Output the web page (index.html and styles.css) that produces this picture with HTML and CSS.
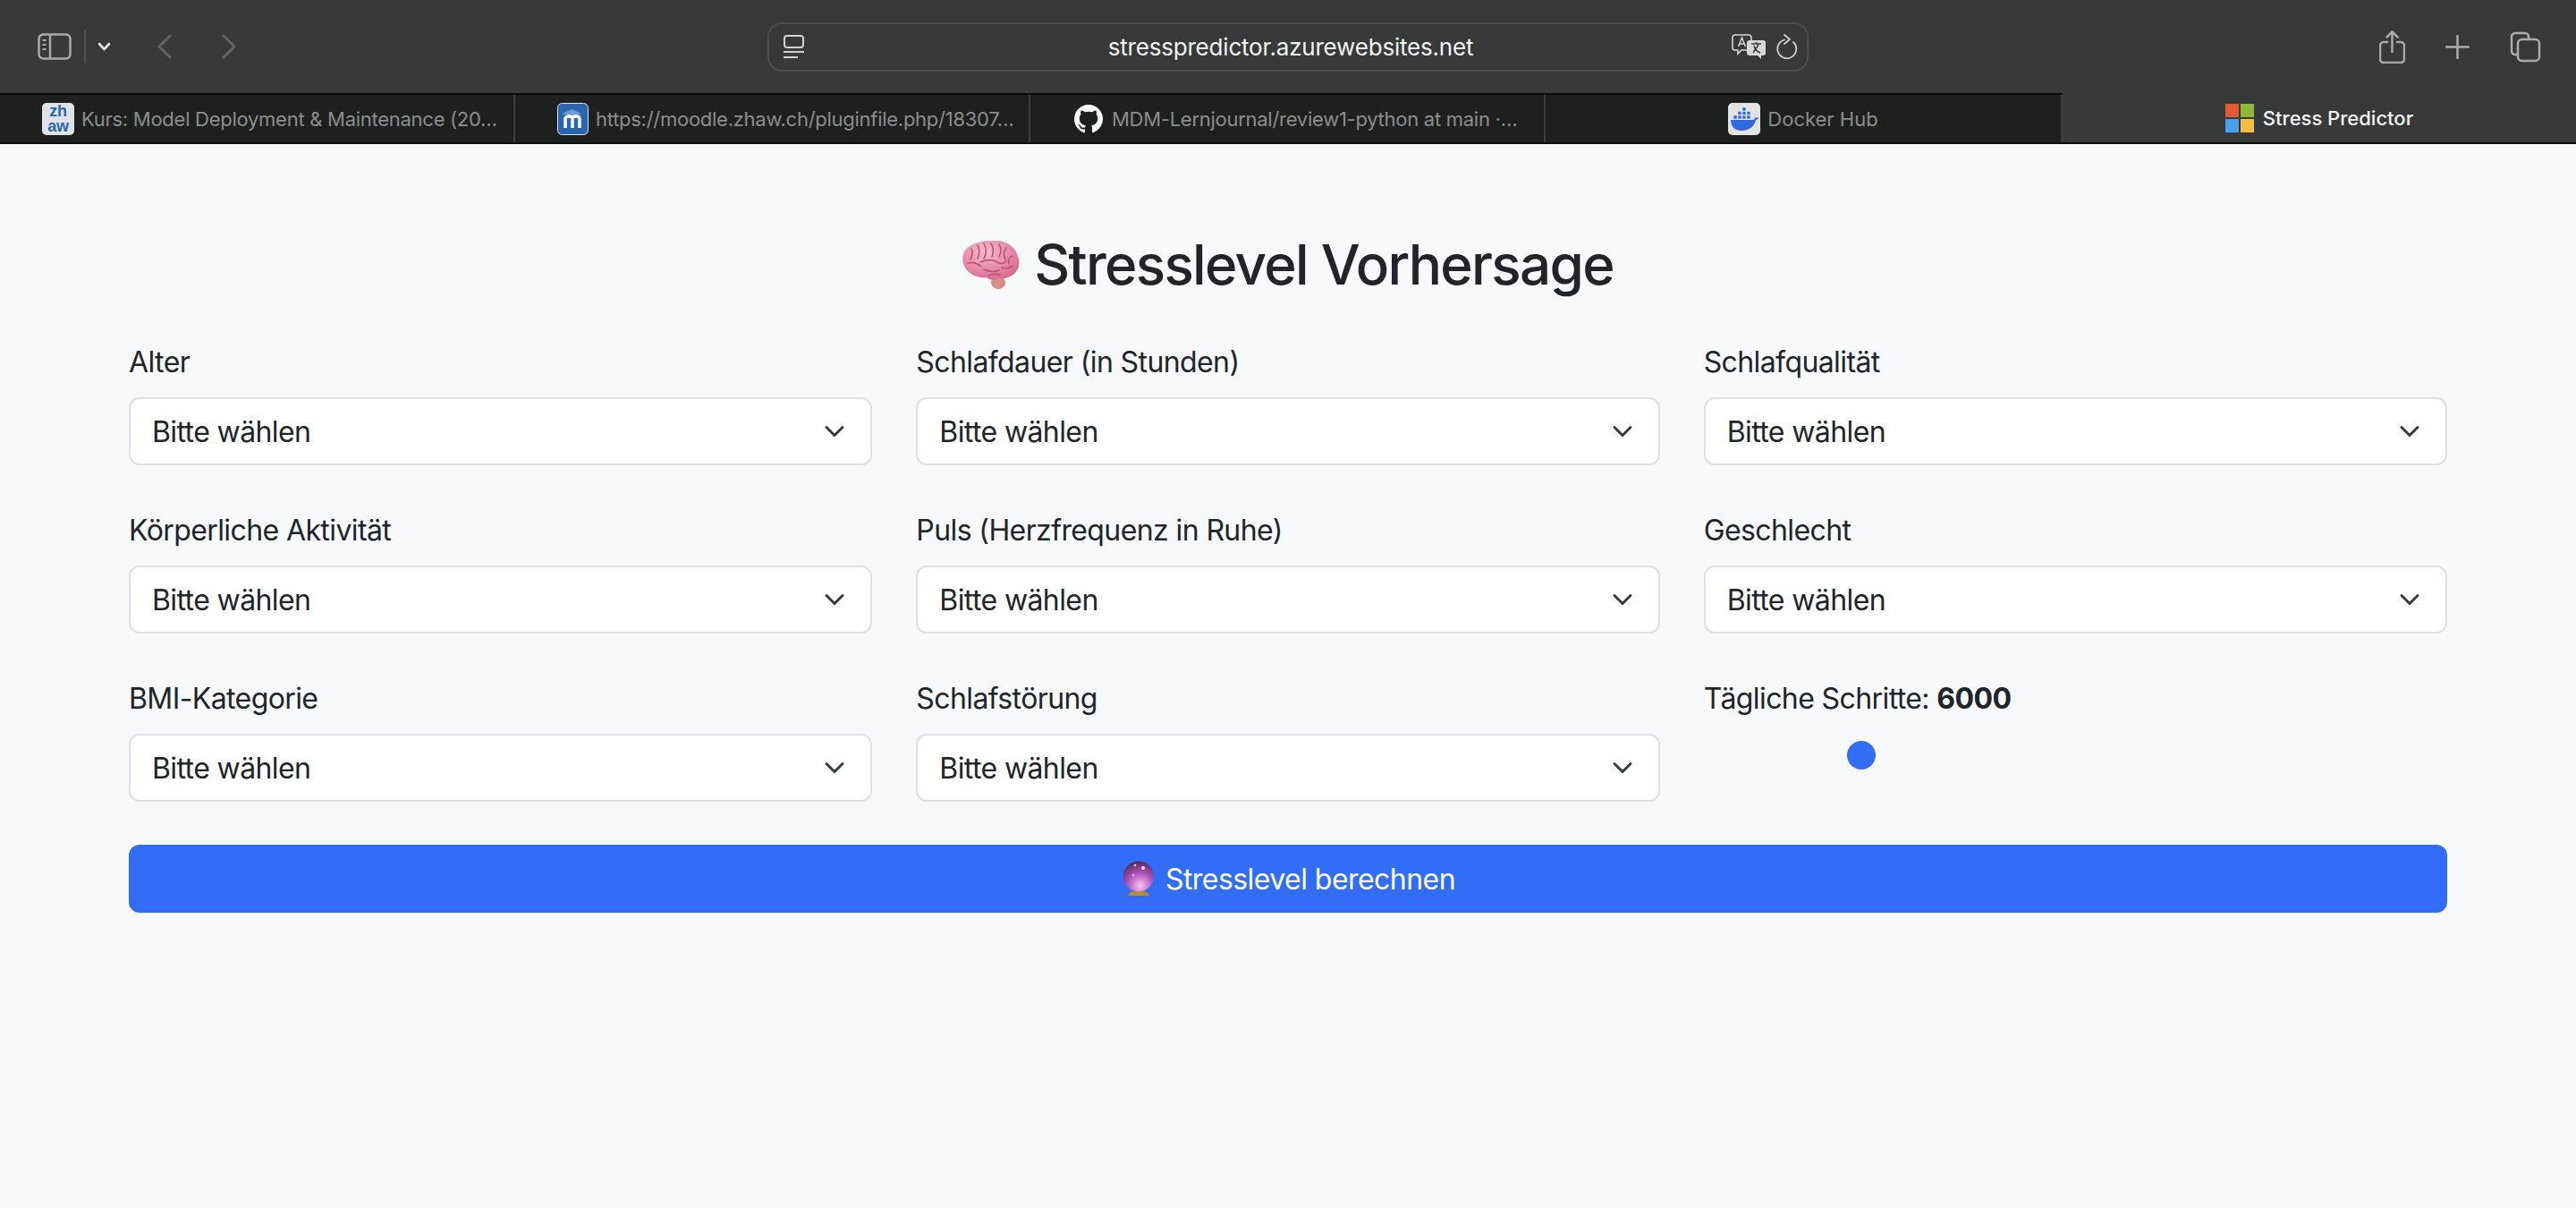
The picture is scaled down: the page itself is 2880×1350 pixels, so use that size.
FILE: index.html
```html
<!DOCTYPE html>
<html lang="de">
<head>
    <meta charset="UTF-8">
    <meta name="viewport" content="width=device-width, initial-scale=1.0">
    <title>Stress Predictor</title>
    <link rel="stylesheet" href="styles.css">
</head>
<body>
    <header class="browser">
        <div class="toolbar">
            <div class="toolbar_left">
                <svg class="icon_sidebar" width="38" height="30" viewBox="0 0 38 30" fill="none" stroke="#a9aaa9" stroke-width="2.5">
                    <rect x="1.5" y="1.5" width="35" height="27" rx="5"/>
                    <path d="M14 2v26"/>
                    <path d="M5.5 8h4M5.5 13h4M5.5 18h4" stroke-width="2"/>
                </svg>
                <span class="toolbar_divider"></span>
                <svg class="icon_more" width="15" height="10" viewBox="0 0 15 10" fill="none" stroke="#e6e6e6" stroke-width="2.6" stroke-linecap="round" stroke-linejoin="round">
                    <path d="M2 2l5.500 6L13 2"/>
                </svg>
                <svg class="icon_back" width="16" height="28" viewBox="0 0 16 28" fill="none" stroke="#616362" stroke-width="3" stroke-linecap="round" stroke-linejoin="round">
                    <path d="M14 2L2 14l12 12"/>
                </svg>
                <svg class="icon_forward" width="16" height="28" viewBox="0 0 16 28" fill="none" stroke="#616362" stroke-width="3" stroke-linecap="round" stroke-linejoin="round">
                    <path d="M2 2l12 12L2 26"/>
                </svg>
            </div>
            <div class="url_bar">
                <svg class="icon_reader" width="23" height="26" viewBox="0 0 23 26" fill="none" stroke="#d0d1d0" stroke-width="2">
                    <rect x="1" y="1" width="21" height="13" rx="3"/>
                    <path d="M0 19h23M0 25h16"/>
                </svg>
                <span class="url_text">stresspredictor.azurewebsites.net</span>
                <svg class="icon_translate" width="38" height="28" viewBox="0 0 38 28">
                    <path d="M4 1h15a3 3 0 0 1 3 3v11a3 3 0 0 1-3 3H11l-4 4v-4H4a3 3 0 0 1-3-3V4a3 3 0 0 1 3-3z" fill="#383a39" stroke="#d6d7d6" stroke-width="1.600"/>
                    <path d="M7.500 14l4-10 4 10M9 11h5" fill="none" stroke="#d6d7d6" stroke-width="1.500"/>
                    <path d="M20 7h15a3 3 0 0 1 3 3v11a3 3 0 0 1-3 3h-2v4l-4-4h-9a3 3 0 0 1-3-3V10a3 3 0 0 1 3-3z" fill="#d6d7d6"/>
                    <path d="M22 11h11M27.500 9v2M24 21l6-9M25 13c1 4 4 7 7 8" fill="none" stroke="#383a39" stroke-width="1.500"/>
                </svg>
                <svg class="icon_reload" width="24" height="28" viewBox="0 0 24 28" fill="none" stroke="#cfd0cf" stroke-width="1.800" stroke-linecap="round" stroke-linejoin="round">
                    <path d="M9 6.500a10.500 10.500 0 1 0 10 2.500"/>
                    <path d="M8 1l6 5-6 5" transform="translate(1 0)"/>
                </svg>
            </div>
            <div class="toolbar_right">
                <svg width="29" height="37" viewBox="0 0 29 37" fill="none" stroke="#a9aaa9" stroke-width="2.500" stroke-linecap="round" stroke-linejoin="round">
                    <path d="M9 13H5a4 4 0 0 0-4 4v15a4 4 0 0 0 4 4h19a4 4 0 0 0 4-4V17a4 4 0 0 0-4-4h-4"/>
                    <path d="M14.500 24V2M8.500 7.500l6-6 6 6"/>
                </svg>
                <svg width="27" height="27" viewBox="0 0 27 27" fill="none" stroke="#a9aaa9" stroke-width="2.500" stroke-linecap="round">
                    <path d="M13.500 1v25M1 13.500h25"/>
                </svg>
                <svg width="35" height="35" viewBox="0 0 35 35" fill="none" stroke="#a9aaa9" stroke-width="2.500">
                    <path d="M8 26H6a4 4 0 0 1-4-4V6a4 4 0 0 1 4-4h11a4 4 0 0 1 4 4v3"/>
                    <rect x="9" y="9" width="24" height="24" rx="4.500"/>
                </svg>
            </div>
        </div>
        <nav class="tab_bar">
            <div class="tab">
                <span class="favicon favicon_zhaw">zh<br>aw</span>
                <span class="tab_title">Kurs: Model Deployment &amp; Maintenance (20…</span>
            </div>
            <div class="tab">
                <svg class="favicon_svg" width="35" height="36" viewBox="0 0 35 36">
                    <rect x=".5" y=".5" width="34" height="35" rx="5" fill="#2a65ad" stroke="#dfe3e8"/>
                    <path d="M5 12l12-5 10 5-10 3z" fill="#6f9fd6"/>
                    <path d="M9 28V16M17 28V18c0-2 1.500-3 4-3s4 1 4 3v10M9 18c0-2 2-3 4-3s4 1 4 3" fill="none" stroke="#fff" stroke-width="3.500"/>
                </svg>
                <span class="tab_title">https://moodle.zhaw.ch/pluginfile.php/18307…</span>
            </div>
            <div class="tab tab_github">
                <svg class="favicon_svg" width="32" height="32" viewBox="0 0 16 16" fill="#fff">
                    <path d="M8 0C3.580 0 0 3.580 0 8c0 3.540 2.290 6.530 5.470 7.590.4.070.55-.17.55-.38 0-.19-.01-.82-.01-1.490-2.010.37-2.530-.49-2.690-.94-.09-.23-.48-.94-.82-1.130-.28-.15-.68-.52-.01-.53.63-.01 1.080.58 1.230.82.72 1.210 1.870.87 2.330.66.07-.52.28-.87.51-1.070-1.780-.2-3.640-.89-3.640-3.950 0-.87.31-1.590.82-2.150-.08-.2-.36-1.020.08-2.120 0 0 .67-.21 2.200.82.64-.18 1.320-.27 2-.27.68 0 1.360.09 2 .27 1.530-1.040 2.200-.82 2.200-.82.44 1.100.16 1.920.08 2.120.51.56.82 1.270.82 2.150 0 3.070-1.870 3.750-3.650 3.950.29.25.54.73.54 1.480 0 1.070-.01 1.930-.01 2.200 0 .21.15.46.55.38A8.013 8.013 0 0 0 16 8c0-4.420-3.580-8-8-8z"/>
                </svg>
                <span class="tab_title">MDM-Lernjournal/review1-python at main ·…</span>
            </div>
            <div class="tab tab_center tab_docker">
                <svg class="favicon_svg" width="36" height="36" viewBox="0 0 36 36">
                    <rect width="36" height="36" rx="5" fill="#e3e3e3"/>
                    <path d="M3 19h25c1 0 2-1 2.500-3 1 .7 2.500 1 4 .3-.7 1.700-2 2.700-3.500 2.900C29 27 23 31 15 31 7 31 3 26 3 19z" fill="#2f6ae0"/>
                    <path d="M6 14h4v4H6zM11 14h4v4h-4zM16 14h4v4h-4zM21 14h4v4h-4zM11 9.500h4v4h-4zM16 9.500h4v4h-4zM21 9.500h4v4h-4zM16 5h4v4h-4z" fill="#2f6ae0" stroke="#e3e3e3" stroke-width=".6"/>
                </svg>
                <span class="tab_title">Docker Hub</span>
            </div>
            <div class="tab tab_center tab_active">
                <span class="ms_logo">
                    <i class="ms_red"></i><i class="ms_green"></i><i class="ms_blue"></i><i class="ms_yellow"></i>
                </span>
                <span class="tab_title">Stress Predictor</span>
            </div>
        </nav>
    </header>

    <main class="container">
        <h2 class="page_title">
            <svg class="emoji_brain" width="64" height="54" viewBox="0 0 64 54">
                <defs>
                    <radialGradient id="brain_fill" cx="40%" cy="30%" r="75%">
                        <stop offset="0" stop-color="#f7bccd"/>
                        <stop offset="1" stop-color="#d8688e"/>
                    </radialGradient>
                </defs>
                <path d="M34 40c7-1 13 1 14 6 .6 4-3 8-8 8s-8-4-8-8z" fill="#d98f8a"/>
                <path d="M27 0c12-2 26 1 32 11 6 9 6 20-1 26-5 4-11 6-18 5-5 3-10 2-13-1C16 42 6 37 2 28-2 19 1 9 10 5c5-3 11-4 17-5z" fill="url(#brain_fill)"/>
                <path d="M10 9c2 4 1 8-1 12M17 5c3 5 2 10 0 15M24 3c3 6 3 12 0 17M32 3c3 5 3 10 1 15M41 4c3 5 2 10 0 14M49 8c-3 4-3 9-1 13M56 17c-4 1-5 5-4 9M6 25c6-1 11 0 15 4M20 24c7-3 14-3 19 0 3 2 7 2 10-1M24 32c6 3 12 3 17 1M29 39c4-2 9-2 13-1M44 30c4 2 8 1 12-2" fill="none" stroke="#bd5378" stroke-width="1.600" stroke-linecap="round"/>
            </svg>
            <span>Stresslevel Vorhersage</span>
        </h2>

        <form class="form_grid">
            <div class="field">
                <label class="field_label" for="alter">Alter</label>
                <select class="field_select" id="alter"><option>Bitte wählen</option></select>
            </div>
            <div class="field">
                <label class="field_label" for="schlafdauer">Schlafdauer (in Stunden)</label>
                <select class="field_select" id="schlafdauer"><option>Bitte wählen</option></select>
            </div>
            <div class="field">
                <label class="field_label" for="schlafqualitaet">Schlafqualität</label>
                <select class="field_select" id="schlafqualitaet"><option>Bitte wählen</option></select>
            </div>
            <div class="field">
                <label class="field_label" for="aktivitaet">Körperliche Aktivität</label>
                <select class="field_select" id="aktivitaet"><option>Bitte wählen</option></select>
            </div>
            <div class="field">
                <label class="field_label" for="puls">Puls (Herzfrequenz in Ruhe)</label>
                <select class="field_select" id="puls"><option>Bitte wählen</option></select>
            </div>
            <div class="field">
                <label class="field_label" for="geschlecht">Geschlecht</label>
                <select class="field_select" id="geschlecht"><option>Bitte wählen</option></select>
            </div>
            <div class="field">
                <label class="field_label" for="bmi">BMI-Kategorie</label>
                <select class="field_select" id="bmi"><option>Bitte wählen</option></select>
            </div>
            <div class="field">
                <label class="field_label" for="schlafstoerung">Schlafstörung</label>
                <select class="field_select" id="schlafstoerung"><option>Bitte wählen</option></select>
            </div>
            <div class="field">
                <label class="field_label" for="schritte">Tägliche Schritte: <b>6000</b></label>
                <input class="field_range" id="schritte" type="range" min="0" max="30000" step="500" value="6000">
            </div>
            <button class="submit_button" type="button">
                <svg width="36" height="40" viewBox="0 0 36 40">
                    <defs>
                        <radialGradient id="ball_fill" cx="55%" cy="80%" r="85%">
                            <stop offset="0" stop-color="#f3c6ee"/>
                            <stop offset=".45" stop-color="#b65cc0"/>
                            <stop offset="1" stop-color="#4a1f4e"/>
                        </radialGradient>
                    </defs>
                    <path d="M6 39c1-3 4-5 6-5h12c2 0 5 2 6 5z" fill="#b58a2e"/>
                    <circle cx="18" cy="17.500" r="17" fill="url(#ball_fill)"/>
                    <circle cx="23" cy="8" r="2" fill="#f7d8f5"/>
                    <circle cx="14" cy="5" r="1.200" fill="#f7d8f5"/>
                    <circle cx="12" cy="16" r="1.200" fill="#e8b8e8"/>
                </svg>
                <span>Stresslevel berechnen</span>
            </button>
        </form>
    </main>
</body>
</html>
```

FILE: styles.css
```css
* {
    margin: 0;
    padding: 0;
    box-sizing: border-box;
}
body {
    background: #f8f9fb;
    color: #212529;
    font-family: "Inter", "Liberation Sans", sans-serif;
}

/* browser window */
.browser {
    background: #383a39;
}
.toolbar {
    height: 104px;
    display: grid;
    grid-template-columns: 858px 1164px 1fr;
    align-items: center;
}
.toolbar_left {
    display: flex;
    align-items: center;
    padding-left: 42px;
}
.toolbar_divider {
    width: 2px;
    height: 36px;
    margin: 0 13px 0 14px;
    background: #4d4f4e;
}
.icon_back {
    margin-left: 52px;
}
.icon_forward {
    margin-left: 56px;
}
.url_bar {
    height: 55px;
    display: flex;
    align-items: center;
    padding: 0 10px 0 16px;
    border: 2px solid #4c4e4d;
    border-radius: 16px;
}
.url_text {
    flex: 1;
    text-align: center;
    color: #f2f2f2;
    font-size: 26px;
    letter-spacing: -0.2px;
    padding-left: 51px;
}
.icon_reload {
    margin-left: 12px;
}
.toolbar_right {
    display: flex;
    align-items: center;
    justify-content: flex-end;
    gap: 45px;
    padding-right: 39px;
}
.tab_bar {
    height: 57px;
    display: flex;
    border-top: 2px solid #0c0d0c;
    border-bottom: 2px solid #0c0d0c;
}
.tab {
    width: 576px;
    display: flex;
    align-items: center;
    gap: 8px;
    padding-left: 47px;
    background: #1e201f;
    border-right: 2px solid #3d3f3e;
    color: #8c8d8c;
    font-size: 22px;
    letter-spacing: -0.27px;
    white-space: nowrap;
}
.tab_github {
    gap: 10px;
    padding-left: 49px;
}
.tab_center {
    justify-content: center;
    padding-left: 0;
    letter-spacing: 0;
}
.tab_docker {
    width: 578px;
}
.tab_active {
    flex: 1;
    gap: 10px;
    background: #383a39;
    border-right: 0;
    color: #f4f4f4;
    font-weight: 500;
    margin-top: -2px;
}
.favicon {
    flex: none;
    width: 36px;
    height: 36px;
    border-radius: 5px;
    text-align: center;
    font-family: "Liberation Sans", sans-serif;
    font-weight: 700;
}
.favicon_zhaw {
    background: #dfe3e8;
    color: #2a65ad;
    font-size: 18px;
    line-height: 17px;
    padding-top: 1px;
}
.favicon_svg {
    flex: none;
}
.ms_logo {
    width: 32px;
    height: 32px;
    display: grid;
    grid-template-columns: 15px 15px;
    grid-template-rows: 15px 15px;
    gap: 2px;
}
.ms_red {
    background: #e05a33;
}
.ms_green {
    background: #8cb738;
}
.ms_blue {
    background: #4aa0ee;
}
.ms_yellow {
    background: #f6bd41;
}

/* page */
.container {
    padding: 96px 144px 0;
}
.page_title {
    display: flex;
    align-items: center;
    justify-content: center;
    gap: 16px;
    height: 77px;
    margin-bottom: 46px;
    font-size: 62px;
    font-weight: 500;
    letter-spacing: -1.7px;
}
.form_grid {
    display: grid;
    grid-template-columns: repeat(3, 1fr);
    column-gap: 49px;
    row-gap: 48px;
}
.field_label {
    display: block;
    height: 48px;
    margin-bottom: 16px;
    font-size: 32px;
    line-height: 50px;
    letter-spacing: -0.6px;
}
.field_label b {
    font-weight: 700;
}
.field_select {
    display: block;
    width: 100%;
    height: 76px;
    padding: 0 72px 0 24px;
    appearance: none;
    background: #fff url("data:image/svg+xml,%3csvg xmlns='http://www.w3.org/2000/svg' viewBox='0 0 16 16'%3e%3cpath fill='none' stroke='%23343a40' stroke-linecap='round' stroke-linejoin='round' stroke-width='2' d='m2 5 6 6 6-6'/%3e%3c/svg%3e") no-repeat right 24px center / 32px 24px;
    border: 2px solid #dee2e6;
    border-radius: 12px;
    color: #212529;
    font-family: inherit;
    font-size: 32px;
    letter-spacing: -0.6px;
}
.field_range {
    display: block;
    width: 100%;
    height: 48px;
    appearance: none;
    background: transparent;
}
.field_range::-webkit-slider-thumb {
    width: 32px;
    height: 32px;
    appearance: none;
    background: #316df5;
    border-radius: 50%;
}
.submit_button {
    grid-column: 1 / -1;
    height: 76px;
    display: flex;
    align-items: center;
    justify-content: center;
    gap: 12px;
    padding-left: 2px;
    background: #316df5;
    border: 0;
    border-radius: 12px;
    color: #fff;
    font-family: inherit;
    font-size: 32px;
    letter-spacing: -0.55px;
}
```
